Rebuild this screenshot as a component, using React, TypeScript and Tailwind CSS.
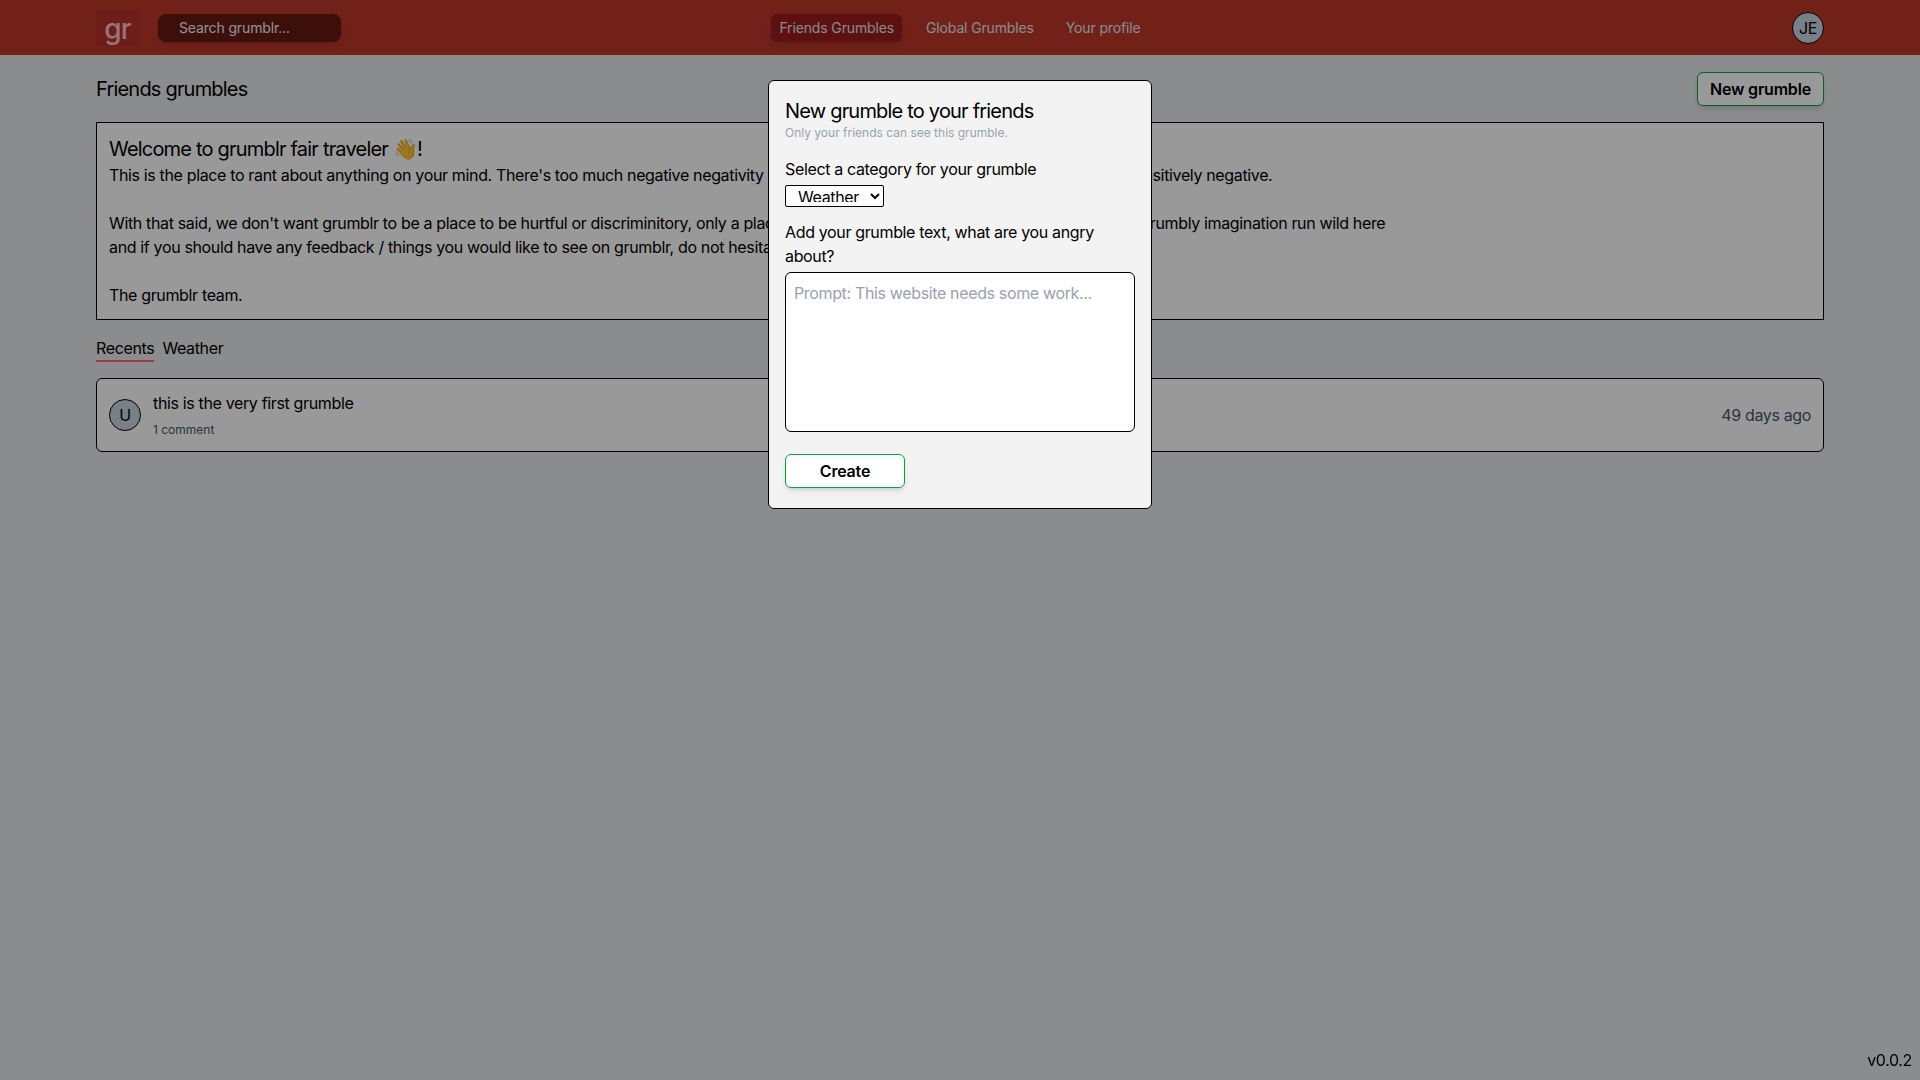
export default function App() {
  return (
    <div className="relative min-h-screen bg-[#e8e9eb] font-['Inter',sans-serif] tracking-[-0.022em] text-black">
      <header className="flex h-[55px] items-center justify-between bg-[#be372b] px-24">
        <div className="flex w-[300px] items-center">
          <div className="flex h-9 w-[43px] items-center justify-center bg-[#b83329] pt-[2px] text-[28px] leading-none font-medium tracking-[-0.03em] text-[#fac5c5]">gr</div>
          <div className="ml-[19px] flex h-7 w-[183px] items-center rounded-lg bg-[#661a12] pl-[21px] text-sm tracking-[-0.01em] text-gray-100 shadow-md">Search grumblr...</div>
        </div>
        <nav className="flex items-center gap-4 text-sm tracking-[-0.01em] text-gray-200">
          <span className="flex h-7 items-center rounded-md bg-[#991b1b] px-2 shadow-md">Friends Grumbles</span>
          <span className="flex h-7 items-center px-2">Global Grumbles</span>
          <span className="flex h-7 items-center px-2">Your profile</span>
        </nav>
        <div className="flex w-[300px] justify-end">
          <div className="flex h-8 w-8 items-center justify-center rounded-full border border-black bg-[#cbd5e1] text-base">JE</div>
        </div>
      </header>

      <main className="px-24">
        <div className="flex h-[67px] items-center justify-between">
          <h1 className="text-xl tracking-[-0.04em]">Friends grumbles</h1>
          <button className="h-[34px] w-[127px] rounded-md border border-green-600 bg-white font-semibold tracking-[-0.0125em] shadow-md">New grumble</button>
        </div>
        <section className="h-[198px] border border-black bg-white px-3 pt-3">
          <h2 className="text-xl leading-7 tracking-[-0.04em]">Welcome to grumblr fair traveler 👋!</h2>
          <p className="leading-6">This is the place to rant about anything on your mind. There's too much negative negativity in the world, so in here we really try to keep things positively negative.</p>
          <p className="mt-6 leading-6">With that said, we don't want grumblr to be a place to be hurtful or discriminitory, only a place to vent and be silly, so please just go on, let your grumbly imagination run wild here</p>
          <p className="leading-6">and if you should have any feedback / things you would like to see on grumblr, do not hesitate to let us know.</p>
          <p className="mt-6 leading-6">The grumblr team.</p>
        </section>
        <div className="mt-4 flex gap-2">
          <span className="h-[26px] border-b-2 border-red-400 leading-6">Recents</span>
          <span className="leading-6">Weather</span>
        </div>
        <div className="mt-4 flex h-[74px] items-center justify-between rounded-md border border-black bg-white px-3">
          <div className="flex items-center gap-3">
            <div className="flex h-8 w-8 items-center justify-center rounded-full border border-black bg-[#cbd5e1]">U</div>
            <div className="mb-[2px]">
              <div className="leading-6">this is the very first grumble</div>
              <div className="mt-[7px] text-xs tracking-normal text-gray-600">1 comment</div>
            </div>
          </div>
          <span className="text-gray-600">49 days ago</span>
        </div>
      </main>

      <div className="fixed inset-0 flex items-start justify-center bg-black/40 pt-20">
        <div className="flex h-[429px] w-[384px] flex-col rounded-md border border-black bg-[#f3f3f3] p-4">
          <h3 className="text-xl leading-7 tracking-[-0.04em]">New grumble to your friends</h3>
          <p className="text-xs tracking-normal text-gray-400">Only your friends can see this grumble.</p>
          <label className="mt-4 leading-6">Select a category for your grumble</label>
          <select className="mt-1 h-[22px] w-[99px] rounded-[2px] border border-black bg-white pb-1 pl-2 text-base">
            <option>Weather</option>
          </select>
          <label className="mt-[13px] leading-6">Add your grumble text, what are you angry about?</label>
          <textarea className="mt-1 h-40 w-full resize-none rounded-md border border-black bg-white px-2 py-2 placeholder:text-gray-400" placeholder="Prompt: This website needs some work..." />
          <button className="mt-[22px] h-[34px] w-[120px] rounded-md border border-green-600 bg-white font-semibold tracking-[-0.0125em] shadow-md">Create</button>
        </div>
      </div>

      <div className="fixed bottom-2 right-2 text-base text-black">v0.0.2</div>
    </div>
  );
}
